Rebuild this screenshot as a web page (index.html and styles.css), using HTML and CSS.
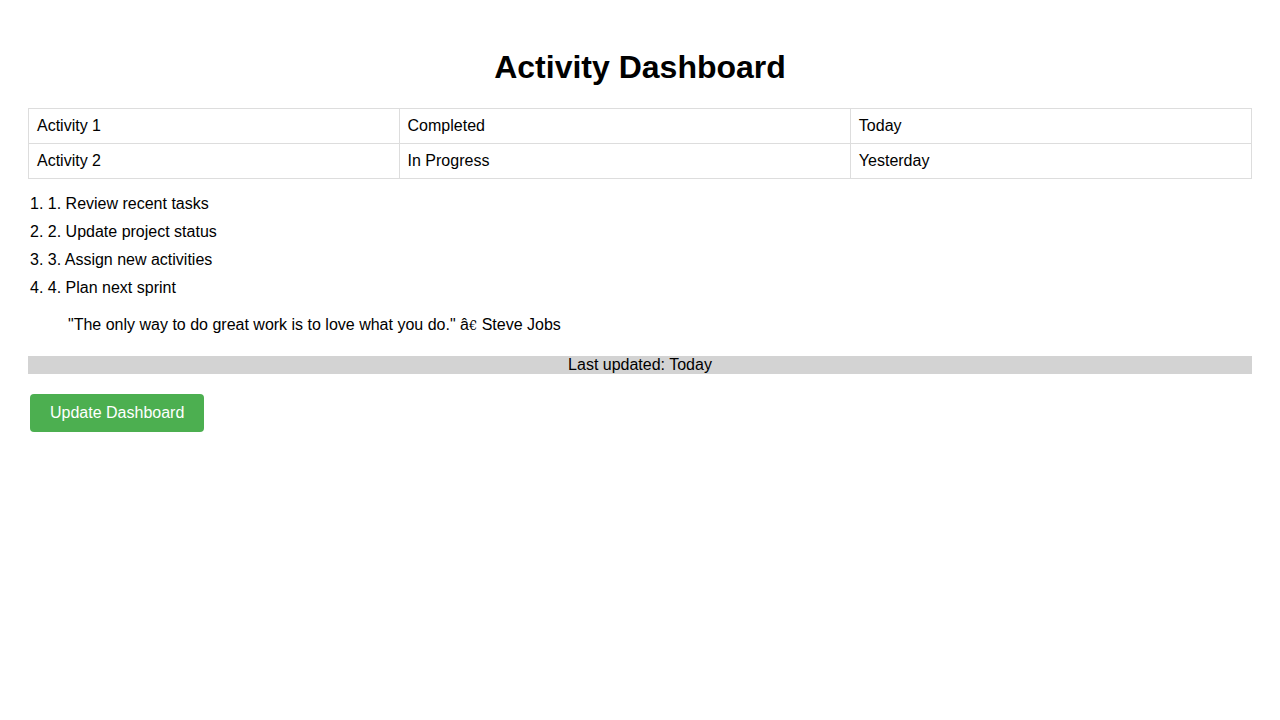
FILE: index.html
```html
<!DOCTYPE html>
<html>
<head>
<meta charset="utf-8">
<link rel="stylesheet" href="styles.css">
</head>
<body>
<div class="container">
  <h1 class="title">Activity Dashboard</h1>
  <table class="activity-table">
    <colgroup>
      <col class="col-a">
      <col class="col-b">
      <col class="col-c">
    </colgroup>
    <tr><td>Activity 1</td><td>Completed</td><td>Today</td></tr>
    <tr><td>Activity 2</td><td>In Progress</td><td>Yesterday</td></tr>
  </table>
  <ol class="task-list">
    <li>1. Review recent tasks</li>
    <li>2. Update project status</li>
    <li>3. Assign new activities</li>
    <li>4. Plan next sprint</li>
  </ol>
  <blockquote class="quote">"The only way to do great work is to love what you do." â<span class="euro">€</span> Steve Jobs</blockquote>
  <div class="footer">Last updated: Today</div>
  <button class="update-btn">Update Dashboard</button>
</div>
</body>
</html>
```
FILE: styles.css
```css
body {
  margin: 8px;
  font-family: "Liberation Sans", Arial, sans-serif;
  color: #000;
  background: #fff;
}
.container {
  padding: 20px;
}
.title {
  text-align: center;
  font-size: 32px;
  font-weight: bold;
  margin: 21.44px 0;
}
.activity-table {
  width: 100%;
  border-collapse: collapse;
  font-size: 16px;
}
.col-a { width: 30.3%; }
.col-b { width: 36.9%; }
.col-c { width: 32.8%; }
.activity-table td {
  border: 1px solid #ddd;
  padding: 8px;
  text-align: left;
}
.task-list {
  list-style-position: inside;
  padding-left: 2px;
  margin: 16px 0 19px;
}
.task-list li {
  margin-bottom: 10px;
}
.task-list li:last-child {
  margin-bottom: 0;
}
.quote {
  margin: 19px 40px 20px;
}
.euro {
  font-family: "DejaVu Serif", serif;
  font-size: 13px;
}
.footer {
  background: #d3d3d3;
  text-align: center;
  margin-top: 22px;
}
.update-btn {
  margin-top: 20px;
  margin-left: 2px;
  background: #4caf50;
  color: #fff;
  border: none;
  border-radius: 4px;
  padding: 10px 20px;
  font-family: "Liberation Sans", Arial, sans-serif;
  font-size: 16px;
}
```
